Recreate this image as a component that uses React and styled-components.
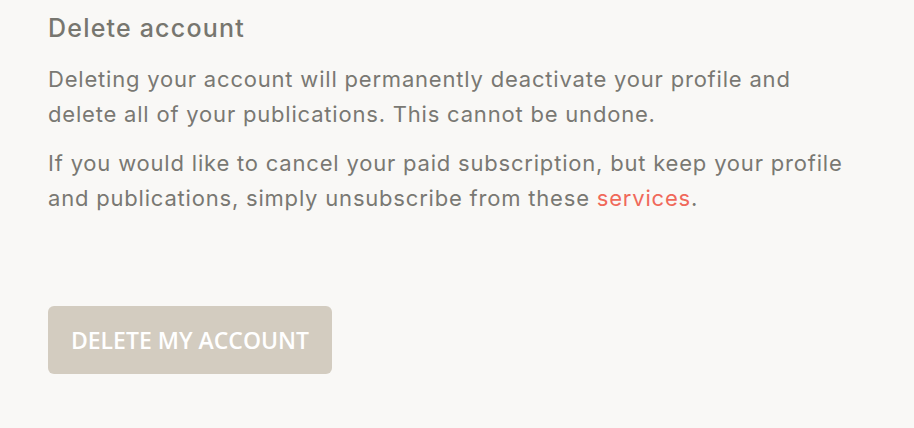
import React from "react";
import styled, { createGlobalStyle } from "styled-components";

const Global = createGlobalStyle`
  html, body {
    margin: 0;
    padding: 0;
    background: #f9f8f6;
  }
`;

const Page = styled.div`
  width: 914px;
  height: 428px;
  box-sizing: border-box;
  padding: 10px 48px 0;
  background: #f9f8f6;
  font-family: Inter, "Liberation Sans", Arial, sans-serif;
  color: #797873;
  overflow: hidden;
`;

const Title = styled.h2`
  margin: 0 0 16px;
  font-size: 25px;
  font-weight: 500;
  letter-spacing: 1.2px;
  line-height: 36px;
  color: #77766f;
`;

const Text = styled.p`
  margin: 0 0 14px;
  font-size: 22px;
  letter-spacing: 0.8px;
  line-height: 35px;
  width: 810px;
`;

const Link = styled.a`
  color: #f0695a;
  text-decoration: none;
`;

const Actions = styled.div`
  margin-top: 90px;
  display: flex;
`;

const DangerButton = styled.button`
  width: 284px;
  height: 68px;
  border: none;
  border-radius: 6px;
  background: #d3ccc0;
  color: #ffffff;
  font-family: "Open Sans", sans-serif;
  font-size: 23px;
  font-weight: 600;
  text-transform: uppercase;
  cursor: pointer;
`;

export default function App() {
  return (
    <Page>
      <Global />
      <Title>Delete account</Title>
      <Text>
        Deleting your account will permanently deactivate your profile and delete all of your
        publications. This cannot be undone.
      </Text>
      <Text>
        If you would like to cancel your paid subscription, but keep your profile and
        publications, simply unsubscribe from these <Link href="#">services</Link>.
      </Text>
      <Actions>
        <DangerButton>Delete my account</DangerButton>
      </Actions>
    </Page>
  );
}
